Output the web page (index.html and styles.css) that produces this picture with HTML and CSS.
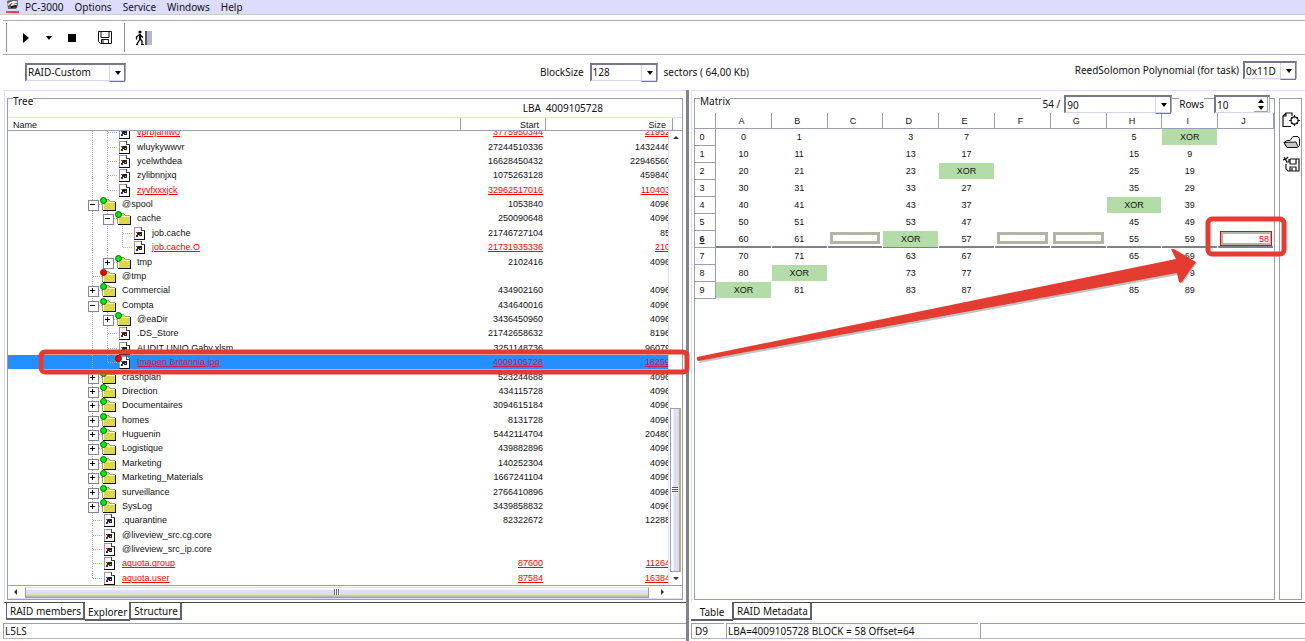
FILE: index.html
```
<!DOCTYPE html>
<html lang="en">
<head>
<meta charset="utf-8">
<title>PC-3000</title>
<link rel="stylesheet" href="styles.css">
</head>
<body>
<svg class="defs" aria-hidden="true">
  <symbol id="file" viewBox="0 0 16 14"><g shape-rendering="crispEdges"><path d="M4 1h7l4 4v9H4z" fill="#fff"/><path d="M4 1h7v1H5v11H4z" fill="#9a9a9a"/><path d="M4 13h10V4h1v10H4z" fill="#111"/><path d="M11 1h1v3h3v1h-4z" fill="#444"/><path d="M6 6h2v1H6z" fill="#e22"/><path d="M6 9h2v2H6z" fill="#22c"/><path d="M8 6h4v4H9v-1H8zM7 7h2v2H7z" fill="#222"/><path d="M10 8h1v1h-1z" fill="#dc4"/></g></symbol>
  <symbol id="folder" viewBox="0 0 16 14"><g shape-rendering="crispEdges"><path d="M3 3h6l2 2h4v8H3z" fill="#dcd84c"/><path d="M3 5h12v1H3zM3 5h1v8H3z" fill="#fffcc0"/><path d="M3 2h6v1H3zM9 3h1v1H9zM10 4h5v1h-5zM2 3h1v10H2z" fill="#a0a080"/><path d="M15 5h1v9H3v-1h12z" fill="#111"/></g></symbol>
</svg>
<div class="app">
  <nav class="menubar">
    <svg class="logo" viewBox="0 0 14 13"><path d="M1 1l3-1h8v5l-2 4H2z" fill="#666"/><path d="M2 5q3-4 9-3-4 1-5 3l5 0" fill="none" stroke="#eee" stroke-width="1.500"/><path d="M5 7.500q3-2 6-1" stroke="#111" stroke-width="2" fill="none"/><path d="M0 12h13" stroke="#f00" stroke-width="1.400"/></svg>
    <button>PC-3000</button><button>Options</button><button>Service</button><button>Windows</button><button>Help</button>
  </nav>
  <div class="toolbar">
    <button aria-label="Run"><svg width="6" height="10" viewBox="0 0 6 10"><path d="M0 0l6 5-6 5z"/></svg></button>
    <button aria-label="Run options"><svg width="6" height="4" viewBox="0 0 6 4"><path d="M0 0h6L3 4z"/></svg></button>
    <button aria-label="Stop"><svg width="8" height="8" viewBox="0 0 8 8"><path d="M0 0h8v8H0z"/></svg></button>
    <button aria-label="Save"><svg width="14" height="13" viewBox="0 0 14 13" fill="none" stroke="#111"><path d="M.5.5h13v12h-11l-2-2z"/><path d="M3 .5v6h8v-6M3.500 12.500v-4h7v4M5 9v3" /></svg></button>
    <span class="bar"></span>
    <button aria-label="Exit"><svg width="17" height="16" viewBox="0 0 17 16"><circle cx="5" cy="2" r="1.600"/><path d="M4.500 4L5 9l-3 5M5 8.500l2 2.500v3.500M4 5L1.500 7v2.500M5 5l3 2.500" fill="none" stroke="#000" stroke-width="1.300"/><path d="M4 4h2v5H4z"/><path d="M1 14.500h2M6 14.500h3" stroke="#000"/><path d="M10 1h2v14h-2z" fill="#556"/><path d="M12 1h5v14h-5z" fill="#b4b4cc"/></svg></button>
  </div>
  <div class="filters">
    <span class="combo mode"><select aria-label="RAID mode"><option>RAID-Custom</option></select></span>
    <div class="field"><label for="bs">BlockSize</label><span class="combo bs"><select id="bs"><option>128</option></select></span><span>sectors ( 64,00 Kb)</span></div>
    <div class="field end"><label for="poly">ReedSolomon Polynomial (for task)</label><span class="combo poly"><select id="poly"><option>0x11D</option></select></span></div>
  </div>
  <main class="panes">
    <section class="pane left">
      <div class="page">
        <div class="group tree">
          <div class="group-head"><span class="legend">Tree</span></div>
          <div class="lba"><span>LBA</span><span>4009105728</span></div>
          <div class="cols"><span>Name</span><span>Start</span><span>Size</span><i></i></div>
          <div class="list">
            <div class="rows"><table><tbody id="tree"></tbody></table></div>
            <div class="vscroll"><i class="tri up"></i><span class="thumb"><i class="grip"></i></span><i class="tri down"></i></div>
          </div>
          <div class="hscroll"><i class="tri prev"></i><span class="thumb"><i class="grip"></i></span><i class="tri next"></i></div>
        </div>
      </div>
      <div class="tabs"><button>RAID members</button><button class="on">Explorer</button><button>Structure</button></div>
      <div class="status"><span class="grow">L5LS</span></div>
    </section>
    <div class="splitter"></div>
    <section class="pane right">
      <div class="page">
        <div class="group matrix">
          <div class="group-head"><span class="legend">Matrix</span>
            <label class="count" for="cnt">54 /</label><span class="combo cnt"><select id="cnt"><option>90</option></select></span>
            <label class="rowslabel" for="rws">Rows</label><span class="spin"><input id="rws" value="10"><span class="steps"><i class="tri up"></i><i class="tri down"></i></span></span>
          </div>
          <table class="grid"><thead id="mhead"></thead><tbody id="mbody"></tbody></table>
        </div>
        <div class="side">
          <button aria-label="New"><svg width="18" height="16" viewBox="0 0 18 16" fill="none" stroke="#111" stroke-width="1.200"><path d="M9 14.500H1V4l3-3h6v3M4 1v3H1"/><circle cx="12.500" cy="8.500" r="3.600"/><path d="M12.500 3v2.500M12.500 11.500v2.500M7 8.500h2.500M15.500 8.500H18M9 5l1.500 1.500M16 5l-1.500 1.500M9 12l1.500-1.500M16 12l-1.500-1.500" stroke-width="1"/></svg></button>
          <button aria-label="Open"><svg width="17" height="12" viewBox="0 0 17 12" fill="none" stroke="#111"><path d="M4 4.500h3l3-4h5l1.500 2v7l-2 2H4L1 6.500l3-2"/><path d="M1 6.500l12-.5 2 4.500-1 1H4z" fill="#c8c8c8"/></svg></button>
          <button aria-label="Save table"><svg width="17" height="16" viewBox="0 0 17 16" fill="none" stroke="#111" stroke-width="1.200"><path d="M7 3h9v12H5l-2-2V8"/><path d="M7 3v5h6V3M7 15v-4h6v4M9 12v3"/><path d="M1 1l3 5M5 1L2 4M0 4l3-1M3 6h3V3"/></svg></button>
        </div>
      </div>
      <div class="tabs"><button class="on">Table</button><button>RAID Metadata</button></div>
      <div class="status"><span class="cell">D9</span><span class="msg">LBA=4009105728 BLOCK = 58 Offset=64</span><span class="grow"></span></div>
    </section>
  </main>
  <svg class="notes" width="1305" height="641" viewBox="0 0 1305 641" aria-hidden="true">
    <path class="shade" d="M699 360L1177 262 1172 251 1197 263 1182 284 1178 275 699 363z"/>
    <path class="arrow" d="M697 357L1176 259 1171 249 1174 249 1196 262 1181 283 1179 282 1177 273 698 361q-2-2-1-4z"/>
    <rect x="41" y="352" width="646" height="20" rx="4"/>
    <rect x="1208" y="219" width="76" height="35" rx="4"/>
  </svg>
</div>
<script src="app.js"></script>
</body>
</html>
```
FILE: app.js
```
// guides: | pass-through, t tee, l corner, + collapsed, - expanded, * collapsed last child
// kind: f file, g folder (green mark), r folder (red mark), x marked file
const tree = `|t;f!;vprbjaniwo;3775950344;21952
|t;f;wluykywwvr;27244510336;1432446
|t;f;ycelwthdea;16628450432;22946560
|t;f;zylibnnjxq;1075263128;459840
|l;f!;zyvfxxxjck;32962517016;110403
-;g;@spool;1053840;4096
|-;g;cache;250090648;4096
||t;f;job.cache;21746727104;85
||l;f!;job.cache.O;21731935336;210
|*;g;tmp;2102416;4096
t;r;@tmp;;
+;g;Commercial;434902160;4096
-;g;Compta;434640016;4096
|+;g;@eaDir;3436450960;4096
|t;f;.DS_Store;21742658632;8196
|t;f;AUDIT UNIO Gaby.xlsm;3251148736;96079
|l;x!;Imagen Britannia.jpg;4009105728;18259
+;g;crashplan;523244688;4096
+;g;Direction;434115728;4096
+;g;Documentaires;3094615184;4096
+;g;homes;8131728;4096
+;g;Huguenin;5442114704;20480
+;g;Logistique;439882896;4096
+;g;Marketing;140252304;4096
+;g;Marketing_Materials;1667241104;4096
+;g;surveillance;2766410896;4096
+;g;SysLog;3439858832;4096
t;f;.quarantine;82322672;12288
t;f;@liveview_src.cg.core;;
t;f;@liveview_src_ip.core;;
t;f!;aquota.group;87600;11264
l;f!;aquota.user;87584;16384`;
const guide = { '|': 'v', t: 'v h', l: 'c h', '+': 'v h box plus', '-': 'v h box', '*': 'c h box plus' };
document.getElementById('tree').innerHTML = tree.split('\n').map(line => {
  const [g, kind, name, start, size] = line.split(';');
  const k = kind[0];
  const icon = k === 'f' || k === 'x' ? 'file' : 'folder';
  const mark = k === 'g' ? '<b class="dot"></b>' : k === 'f' ? '' : '<b class="dot red"></b>';
  const cls = (kind[1] ? 'bad' : '') + (k === 'x' ? ' sel' : '');
  return `<tr class="${cls}"><td><div class="node">${[...g].map(c => `<i class="${guide[c]}"></i>`).join('')}` +
    `<span class="ico"><svg><use href="#${icon}"/></svg>${mark}</span><span>${name}</span></div></td><td>${start}</td><td>${size}</td></tr>`;
}).join('');

const cols = {
  A: '0 10 20 30 40 50 60 70 80 XOR', B: '1 11 21 31 41 51 61 71 XOR 81', C: '. . . . . . [] . . .',
  D: '3 13 23 33 43 53 XOR 63 73 83', E: '7 17 XOR 27 37 47 57 67 77 87', F: '. . . . . . [] . . .', G: '. . . . . . [] . . .',
  H: '5 15 25 35 XOR 45 55 65 75 85', I: 'XOR 9 19 29 39 49 59 69 79 89', J: '. . . . . . 58 . . .'
};
const data = Object.values(cols).map(c => c.split(' '));
document.getElementById('mhead').innerHTML = '<tr><th></th>' + Object.keys(cols).map(c => `<th>${c}</th>`).join('') + '</tr>';
document.getElementById('mbody').innerHTML = [...Array(10).keys()].map(r =>
  `<tr class="${r === 6 ? 'current' : ''}"><th>${r}</th>` + data.map(c => {
    const v = c[r];
    if (v === '[]') return '<td><div class="slot"></div></td>';
    if (v === '58') return '<td><div class="slot hit">58</div></td>';
    return `<td><div class="${v === 'XOR' ? 'xor' : ''}">${v === '.' ? '' : v}</div></td>`;
  }).join('') + '</tr>').join('');
```
FILE: styles.css
```
* { box-sizing: border-box; }
body { margin: 0; background: #fff; color: #111; font: 10px/14px "Noto Sans", sans-serif; }
button, select, input { font: inherit; color: inherit; background: none; border: 0; padding: 0; margin: 0; }
i { font-style: normal; }
.defs { position: absolute; width: 0; height: 0; }
.app { position: relative; height: 100vh; display: flex; flex-direction: column; overflow: hidden; white-space: nowrap; }

.menubar { display: flex; height: 15px; padding-left: 6px; background: #dcdcff; border-bottom: 1px solid #d0ccc8; }
.menubar .logo { width: 14px; height: 13px; margin-right: 5px; }
.menubar button { margin-right: 11px; line-height: 14px; }

.toolbar { display: flex; align-items: center; height: 35px; margin: 5px 0 0 3px; padding-left: 3px; border: solid #a8a8c0; border-width: 1px 0; }
.toolbar button { display: flex; margin-right: 16px; }
.toolbar button:first-child { height: 29px; align-items: center; padding-left: 16px; margin-right: 17px; border-left: 1px solid #8c8ca8; }
.toolbar button:nth-child(3) { margin-right: 22px; }
.toolbar button:nth-child(4) { margin-right: 12px; }
.bar { width: 1px; height: 29px; margin-right: 10px; background: #8c8ca8; }

.filters { display: grid; grid-template-columns: 518fr 538fr 225fr; align-items: center; height: 35px; padding: 0 0 2px 25px; }
.field { display: flex; align-items: center; gap: 6px; }
.field.end { justify-content: flex-end; gap: 4px; padding: 0 8px 3px 0; }
.combo, .spin { position: relative; display: flex; height: 18px; background: #fff; border: solid #77778a; border-width: 2px 1px 1px 2px; border-right-color: #a8a8c0; border-bottom-color: #d4d4f0; }
.combo select { appearance: none; width: 100%; padding-left: 1px; outline: 0; }
.combo::before { content: ""; position: absolute; right: 0; top: 0; width: 14px; height: 16px; border: solid #77778a; border-width: 0 1px 1px 0; border-left: 1px solid #d4d4f0; pointer-events: none; }
.combo::after { content: ""; position: absolute; right: 4px; top: 6px; border: solid transparent; border-width: 4px 3px 0; border-top-color: #000; pointer-events: none; }
.mode { width: 101px; } .bs { width: 68px; } .poly { width: 54px; } .cnt { width: 108px; }

.panes { flex: 1; min-height: 0; display: grid; grid-template-columns: 686fr 3px 616fr; }
.pane { display: flex; flex-direction: column; min-width: 0; min-height: 0; }
.left { padding-left: 4px; }
.right { padding-left: 2px; }
.splitter { background: #82828c; }
.page { flex: 1; min-height: 0; display: flex; padding: 7px 3px 2px 2px; border: solid #dcdcff; border-width: 1px 0 0 1px; border-bottom: 1px solid #4c4c3c; }
.group { flex: 1; min-width: 0; display: flex; flex-direction: column; border: 1px solid #9c9cb4; }
.group-head { display: flex; height: 13px; margin-top: -4px; }
.legend { height: 13px; margin-left: 5px; line-height: 13px; background: #fff; }

.lba { display: flex; gap: 5px; height: 9px; justify-content: flex-end; padding-right: 79px; line-height: 1px; }
.cols { display: flex; height: 14px; border-top: 1px solid #dcdcff; border-bottom: 1px solid #9c9cb4; font: 9px/14px "Liberation Sans", sans-serif; }
.cols span { border-right: 1px solid #9c9cb4; padding-right: 6px; text-align: right; width: 85px; }
.cols span:first-child { flex: 1; padding-left: 5px; text-align: left; }
.cols span:nth-child(3) { width: 127px; }
.cols i { width: 9px; }
.list { flex: 1; min-height: 0; display: flex; }
.rows { flex: 1; min-width: 0; overflow: hidden; }
.rows table { width: calc(100% + 6px); height: calc(100% + 6px); margin-top: -6px; border-collapse: collapse; table-layout: fixed; font: 9px/10px "Liberation Sans", sans-serif; }
.rows td { padding: 0 4px 0 0; text-align: right; }
.rows td:first-child { padding-left: 77px; height: 14px; }
.rows td:nth-child(2) { width: 85px; }
.rows td:nth-child(3) { width: 127px; }
.rows tr > td:first-child { text-align: left; }
.node { display: flex; align-items: center; height: 14px; }
.node > i { position: relative; width: 15px; height: 14px; }
.node > .v { background: repeating-linear-gradient(#a8a8c0 0 1px, transparent 1px 2px) 7px 0 / 1px 100% no-repeat; }
.node > .c { background: repeating-linear-gradient(#a8a8c0 0 1px, transparent 1px 2px) 7px 0 / 1px 50% no-repeat; }
.node > .h::before { content: ""; position: absolute; left: 8px; top: 7px; width: 9px; border-top: 1px dotted #a8a8c0; }
.node > .box::after { content: ""; position: absolute; left: 3px; top: 3px; width: 9px; height: 9px; border: 1px solid #8484a0; background: linear-gradient(#000, #000) 1px 3px / 5px 1px no-repeat #fff; }
.node > .plus::after { background: linear-gradient(#000, #000) 1px 3px / 5px 1px no-repeat, linear-gradient(#000, #000) 3px 1px / 1px 5px no-repeat #fff; }
.ico { position: relative; width: 16px; height: 14px; margin-right: 6px; }
.ico svg { display: block; width: 16px; height: 14px; }
.dot { position: absolute; left: 0; top: 0; width: 7px; height: 7px; border-radius: 50%; background: #0e0; border: 1px solid #186018; }
.dot.red { background: #f00; border-color: #801010; }
.bad td { color: #f00; text-decoration: underline; }
.sel { background: #2490ff; }
.sel td { color: #c8184c; }

.tri { border: 3px solid transparent; width: 0; height: 0; }
.tri.up { border-bottom: 3px solid #333; border-top: 0; }
.tri.down { border-top: 3px solid #333; border-bottom: 0; }
.tri.prev { border-right: 3px solid #333; border-left: 0; }
.tri.next { border-left: 3px solid #333; border-right: 0; }
.vscroll { width: 14px; display: flex; flex-direction: column; align-items: center; padding: 5px 0; border-left: 1px solid #dcdcff; }
.vscroll .thumb { width: 11px; height: 37%; margin: auto 0 5px; border: 1px solid #9c9cb4; border-right: 2px solid #b0ac8c; background: linear-gradient(90deg, #fff 20%, #dcdcff 40%, #dcdcff 75%, #e8e4b0); display: flex; align-items: center; justify-content: center; }
.grip { width: 6px; height: 6px; background: repeating-linear-gradient(#555 0 1px, #fff 1px 2px); }
.hscroll { display: flex; align-items: center; height: 14px; padding: 0 18px 0 6px; border-top: 1px solid #9c9cb4; border-bottom: 1px solid #dcdcff; }
.hscroll .thumb { flex: 1; height: 11px; margin: 0 12px 0 8px; border: 1px solid #9c9cb4; border-top-color: #dcdcff; background: linear-gradient(#fff 10%, #dcdcff 30%, #dcdcff 60%, #e6e2b4 70%, #b0b0b8); display: flex; align-items: center; justify-content: center; }
.hscroll .grip { background: repeating-linear-gradient(90deg, #666 0 1px, #fff 1px 2px); }

.tabs { display: flex; align-items: flex-start; height: 20px; }
.tabs button { height: 17px; padding: 0 2px 0 3px; border: solid #60606c; border-width: 0 2px 2px 1px; }
.tabs .on { height: 19px; padding-top: 2px; border-left: 0; border-right-width: 1px; background: #fff; margin-top: -1px; }
.left .tabs { padding-left: 2px; }
.right .tabs .on { width: 42px; }
.status { display: flex; gap: 2px; height: 16px; margin-bottom: 2px; border-bottom: 1px solid #b4b4cc; line-height: 14px; }
.status span { border: solid #9c9cb4; border-width: 1px 0 0 1px; padding-left: 1px; }
.left .status { margin-left: -1px; }
.grow { flex: 1; }
.cell { width: 33px; } .msg { width: 252px; }
.status .cell { padding-left: 3px; }

.right .group-head { height: 18px; align-items: flex-start; }
.count { margin-left: auto; padding: 0 4px 0 2px; line-height: 18px; background: #fff; }
.rowslabel { margin: 0 10px 0 7px; line-height: 18px; background: #fff; }
.spin { width: 56px; margin-right: 4px; }
.spin input { width: 38px; padding-left: 1px; outline: 0; }
.steps { display: flex; flex-direction: column; gap: 3px; justify-content: center; align-items: center; width: 14px; border: solid #9c9cb4; border-width: 0 1px 1px 0; }
.steps .tri { border-color: transparent; }
.steps .up { border-bottom: 4px solid #000; }
.steps .down { border-top: 4px solid #000; }
.grid { width: 100%; border-collapse: separate; border-spacing: 0; table-layout: fixed; font: 9px/12px "Liberation Sans", sans-serif; text-align: center; }
.grid th, .grid td { height: 17px; padding: 0; font-weight: 400; }
.grid thead th { height: 16px; border-right: 1px solid #9c9cb4; border-bottom: 1px solid #9c9cb4; padding-right: 4px; }
.grid th:first-child { width: 21px; border-right: 1px solid #9c9cb4; }
.grid tbody th { padding-right: 6px; border-bottom: 1px solid #9c9cb4; }
.grid td { padding: 0 1px 1px 0; }
.grid td div { height: 16px; line-height: 16px; }
.grid .xor { background: #b4dca8; }
.current td { background: linear-gradient(#80808a, #80808a) 0 100% / calc(100% - 1px) 2px no-repeat; }
.current th:first-child { font-weight: 700; text-decoration: underline; }
.grid .slot { height: 12px; margin: 0 2px 2px; border: 3px solid #b4b4a4; background: #fff; }
.grid .hit { height: 15px; margin: 0 1px 1px 2px; border: 1px solid #f00; box-shadow: inset 2px 2px #b4b4a4, inset -1px -2px #b4b4a4; color: #f00; line-height: 14px; padding-right: 2px; text-align: right; }
.side { display: flex; flex-direction: column; align-items: center; gap: 8px; width: 23px; margin: 0 0 0 4px; padding: 13px 0 0 1px; border: 1px solid #9c9cb4; }
.side button { display: flex; }

.notes { position: absolute; left: 0; top: 0; pointer-events: none; }
.notes rect { fill: none; stroke: #e43c30; stroke-width: 5; }
.arrow { fill: #e43c30; }
.shade { fill: #c4c4c4; }
```
